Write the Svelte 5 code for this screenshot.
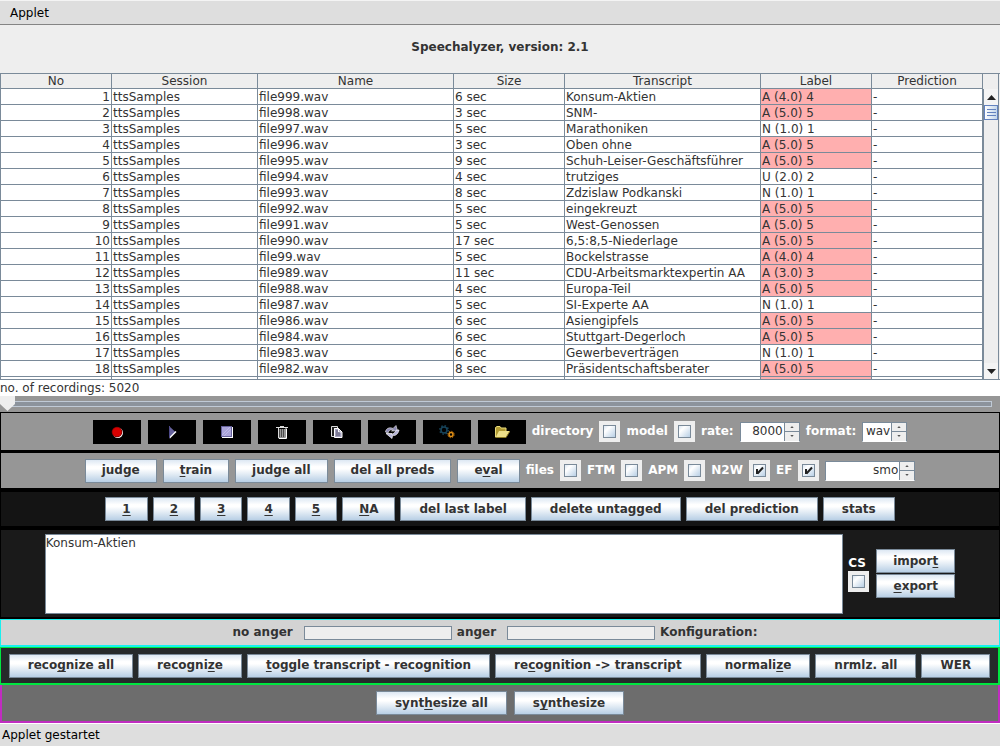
<script>
  const columns = [
    ['No', 111], ['Session', 146], ['Name', 196], ['Size', 111],
    ['Transcript', 196], ['Label', 111], ['Prediction', 111]
  ];
  const recordings = [
    ['999', 6, 'Konsum-Aktien', 'A (4.0) 4'],
    ['998', 3, 'SNM-', 'A (5.0) 5'],
    ['997', 5, 'Marathoniken', 'N (1.0) 1'],
    ['996', 3, 'Oben ohne', 'A (5.0) 5'],
    ['995', 9, 'Schuh-Leiser-Geschäftsführer', 'A (5.0) 5'],
    ['994', 4, 'trutziges', 'U (2.0) 2'],
    ['993', 8, 'Zdzislaw Podkanski', 'N (1.0) 1'],
    ['992', 5, 'eingekreuzt', 'A (5.0) 5'],
    ['991', 5, 'West-Genossen', 'A (5.0) 5'],
    ['990', 17, '6,5:8,5-Niederlage', 'A (5.0) 5'],
    ['99', 5, 'Bockelstrasse', 'A (4.0) 4'],
    ['989', 11, 'CDU-Arbeitsmarktexpertin AA', 'A (3.0) 3'],
    ['988', 4, 'Europa-Teil', 'A (5.0) 5'],
    ['987', 5, 'SI-Experte AA', 'N (1.0) 1'],
    ['986', 6, 'Asiengipfels', 'A (5.0) 5'],
    ['984', 6, 'Stuttgart-Degerloch', 'A (5.0) 5'],
    ['983', 6, 'Gewerbeverträgen', 'N (1.0) 1'],
    ['982', 8, 'Präsidentschaftsberater', 'A (5.0) 5']
  ];
  const icons = ['record', 'play', 'stop', 'delete', 'copy', 'refresh', 'settings', 'open'];

  // An underscore stands before the mnemonic letter.
  const judgeActions = ['judge', '_train', 'judge all', 'del all preds', 'e_val'];
  const labelActions = ['_1', '_2', '_3', '_4', '_5', '_NA', 'del last label', 'delete untagged', 'del prediction', 'stats'];
  const recognizeActions = ['reco_gnize all', 'recogni_ze', '_toggle transcript - recognition', 're_cognition -> transcript', 'normali_ze', 'nrmlz. all', 'WER'];
  const synthActions = ['synt_hesize all', 's_ynthesize'];

  let transcript = $state('Konsum-Aktien');
  let position = $state(0);
</script>

{#snippet action(text)}
  {@const at = text.indexOf('_')}
  <button class="btn" type="button">{#if at < 0}{text}{:else}{text.slice(0, at)}<u>{text[at + 1]}</u>{text.slice(at + 2)}{/if}</button>
{/snippet}

{#snippet tick(id, checked)}
  <span class="tick"><input type="checkbox" {id} {checked} /></span>
{/snippet}

{#snippet spinner(id, value, size, label)}
  <span class="spinner {size}">
    <input type="text" {id} {value} aria-label={label} />
    <span class="steps">
      <button type="button" aria-label="Increase"><svg viewBox="0 0 5 3"><path d="M0 3L2.5 0L5 3z" /></svg></button>
      <button type="button" aria-label="Decrease"><svg viewBox="0 0 5 3"><path d="M0 0L2.5 3L5 0z" /></svg></button>
    </span>
  </span>
{/snippet}

<div class="app">
  <header class="menubar">Applet</header>
  <h1>Speechalyzer, version: 2.1</h1>

  <div class="grid">
    <table>
      <colgroup>
        {#each columns as [, w]}<col style="width: {w}px" />{/each}
      </colgroup>
      <thead>
        <tr>{#each columns as [name]}<th>{name}</th>{/each}</tr>
      </thead>
      <tbody>
        {#each recordings as [file, sec, text, label], i}
          <tr>
            <td class="num">{i + 1}</td>
            <td>ttsSamples</td>
            <td>file{file}.wav</td>
            <td>{sec} sec</td>
            <td>{text}</td>
            <td class:angry={label[0] === 'A'}>{label}</td>
            <td>-</td>
          </tr>
        {/each}
        <tr class="cut">
          {#each columns as [name]}<td class:angry={name === 'Label'}></td>{/each}
        </tr>
      </tbody>
    </table>
    <div class="scroll">
      <div class="corner"></div>
      <button type="button" class="arrow" aria-label="Scroll up"><svg viewBox="0 0 9 5"><path d="M0 5L4.5 0L9 5z" /></svg></button>
      <div class="track">
        <div class="thumb"></div>
      </div>
      <button type="button" class="arrow" aria-label="Scroll down"><svg viewBox="0 0 9 5"><path d="M0 0L4.5 5L9 0z" /></svg></button>
    </div>
  </div>

  <div class="count">no. of recordings: 5020</div>

  <div class="slider">
    <input type="range" min="0" max="100" bind:value={position} aria-label="Position" />
  </div>

  <section class="bar media">
    <div class="tools">
      {#each icons as icon}
        <button type="button" class="tool" aria-label={icon}>
          <svg viewBox="0 0 16 16">
            {#if icon === 'record'}
              <circle cx="8.8" cy="8.8" r="5.2" fill="#fff" />
              <circle cx="8" cy="8" r="5.3" fill="#7a0000" />
              <circle cx="8" cy="8" r="4.6" fill="#d80000" />
            {:else if icon === 'play'}
              <path d="M5 2v12l6.500-6z" fill="#66629c" />
              <path d="M5.500 14L12 7.500" stroke="#fff" stroke-width="1.500" />
              <path d="M5.500 2v12" stroke="#4e4a88" />
            {:else if icon === 'stop'}
              <path d="M3 3h11v11H3z" fill="#fff" />
              <path d="M2 2h11v11H2z" fill="#65619a" />
              <path d="M3 3h9v9H3z" fill="#aaa4d8" />
              <path d="M3 11l8-8M5 12l7-7" stroke="#beb9e8" />
            {:else if icon === 'delete'}
              <path d="M4 5h8v9H4z" fill="#4c4c4c" />
              <path d="M2 3.500h12M6 2.500h4M4.500 4v10h7.500v-10" fill="none" stroke="#ddd" />
              <path d="M6.500 5v8M8.500 5v8M10.500 5v8" stroke="#999" />
              <path d="M5 14.500h7.500V5" fill="none" stroke="#fff" />
            {:else if icon === 'copy'}
              <path d="M2.500 2.500h6v2h-3v8h-3z" fill="#222" stroke="#ddd" />
              <path d="M5.500 4.500h4l3.500 3.500v5.500h-7.500z" fill="#a5a2bd" stroke="#fff" />
              <path d="M9.500 4.500v3.500h3" fill="none" stroke="#fff" />
              <path d="M7 7h2M7 9h4M7 11h4" stroke="#55526e" />
            {:else if icon === 'refresh'}
              <path d="M1.500 8C2 4 6 3 9 4.500L12 1.500L13.500 7H7.500L9.500 6C7 5 5 6 4 9z" fill="#8c89b4" stroke="#ddd" stroke-width=".7" />
              <path d="M15 6C14 10.500 11 12 8.500 11.500L8 14.500L2 9.500H8L7 10.500C9 10 11 9 12.500 6z" fill="#b7b4d8" stroke="#fff" stroke-width=".7" />
            {:else if icon === 'settings'}
              <circle cx="5" cy="6" r="3" fill="none" stroke="#17455c" stroke-width="1.500" />
              <circle cx="5" cy="6" r="4.200" fill="none" stroke="#17455c" stroke-width="1.500" stroke-dasharray="1.500 1.800" />
              <circle cx="12" cy="10.500" r="2" fill="none" stroke="#e29016" stroke-width="1.500" />
              <circle cx="12" cy="10.500" r="3.200" fill="none" stroke="#c87a10" stroke-dasharray="1.300 1.200" />
            {:else}
              <path d="M1.500 13V3.500L3 2.500h3l1 1.500h5v3" fill="#b09a32" stroke="#e8da7a" />
              <path d="M1.500 13.500L5 7h11l-4 6.500z" fill="#eee08a" />
              <path d="M1.500 13.500h10.500L16 7" fill="none" stroke="#8b7a24" />
            {/if}
          </svg>
        </button>
      {/each}
    </div>
    <label for="directory">directory</label>{@render tick('directory', false)}
    <label for="model">model</label>{@render tick('model', false)}
    <label for="rate">rate:</label>{@render spinner('rate', '8000', 'mid')}
    <label for="format">format:</label>{@render spinner('format', 'wav', 'small')}
  </section>

  <section class="bar judge">
    {#each judgeActions as text}{@render action(text)}{/each}
    <label for="files">files</label>{@render tick('files', false)}
    <label for="ftm">FTM</label>{@render tick('ftm', false)}
    <label for="apm">APM</label>{@render tick('apm', false)}
    <label for="n2w">N2W</label>{@render tick('n2w', true)}
    <label for="ef">EF</label>{@render tick('ef', true)}
    {@render spinner('classifier', 'smo', 'large', 'Classifier')}
  </section>

  <section class="bar labels">
    {#each labelActions as text}{@render action(text)}{/each}
  </section>

  <section class="bar edit">
    <textarea bind:value={transcript} aria-label="Transcript" spellcheck="false"></textarea>
    <div class="cs"><label for="cs">CS</label>{@render tick('cs', false)}</div>
    <div class="files">
      {@render action('impor_t')}
      {@render action('_export')}
    </div>
  </section>

  <section class="bar result">
    <label for="noanger">no anger</label><progress id="noanger" value="0" max="1"></progress>
    <label for="anger">anger</label><progress id="anger" value="0" max="1"></progress>
    <span>Konfiguration:</span>
  </section>

  <section class="bar recognize">
    {#each recognizeActions as text}{@render action(text)}{/each}
  </section>

  <section class="bar synth">
    {#each synthActions as text}{@render action(text)}{/each}
  </section>

  <footer>Applet gestartet</footer>
</div>

<style>
  :global(body) { margin: 0; background: #dedede; }
  .app, .app * { box-sizing: border-box; }
  .app {
    display: flex;
    flex-direction: column;
    min-height: 100vh;
    font: 12px/15px "DejaVu Sans", sans-serif;
    color: #333;
    background: #eee;
  }
  button, input, textarea { font: inherit; color: inherit; margin: 0; padding: 0; border-radius: 0; }
  .menubar {
    height: 25px;
    padding: 5px 10px;
    color: #000;
    background: #dedede;
    border-top: 1px solid #f4f4f4;
    border-bottom: 1px solid #848484;
  }
  h1 { margin: 0; padding: 15px 0 18px; font-size: 12px; line-height: 15px; text-align: center; }

  .grid { display: flex; border-top: 1px solid #7a8a99; border-bottom: 1px solid #7a8a99; }
  table { flex: 1; width: 0; table-layout: fixed; border-spacing: 0; border-left: 1px solid #7a8a99; background: #fff; }
  th, td {
    height: 16px;
    padding: 1px 1px 0;
    line-height: 14px;
    font-weight: normal;
    text-align: left;
    white-space: nowrap;
    overflow: hidden;
    border-right: 1px solid #7a8a99;
    border-bottom: 1px solid #7a8a99;
  }
  th { height: 15px; padding: 1px 0 0; line-height: 13px; text-align: center; background: #eee; }
  .num { text-align: right; }
  .angry { background: #ffafaf; }
  .cut td { height: 2px; border-bottom: 0; padding: 0; }
  .scroll { display: flex; flex-direction: column; width: 17px; padding-right: 1px; background: #eee; }
  .scroll > * { border: 0 solid #7a8a99; border-left-width: 1px; border-right-width: 1px; }
  .scroll > .corner { height: 15px; border-left-width: 0; }
  .arrow { display: grid; place-items: center; height: 16px; background: #f4f4f4; }
  .arrow svg { width: 9px; height: 5px; fill: #222; }
  .track { flex: 1; background: #eee; }
  .thumb {
    height: 15px;
    border: 1px solid #6382bf;
    background:
      repeating-linear-gradient(#6382bf 0 1px, transparent 1px 3px) center / 9px 7px no-repeat,
      linear-gradient(90deg, #fff, #c3d6ea);
  }

  .count { height: 16px; padding: 1px 0; background: #fff; }
  .slider { height: 16px; padding-right: 8px; background: #969696; }
  .slider input { appearance: none; display: block; width: 100%; height: 16px; background: none; outline: 0; }
  .slider input::-webkit-slider-runnable-track {
    height: 16px;
    background:
      linear-gradient(#c0cad6, #c0cad6) right 5px / 1px 6px no-repeat,
      linear-gradient(#c0cad6 0 1px, #8c939c 1px 5px, #c0cad6 5px 6px) 8px 5px / 100% 6px no-repeat;
  }
  .slider input::-webkit-slider-thumb {
    appearance: none;
    width: 15px;
    height: 15px;
    background: #eee;
    clip-path: polygon(0 0, 100% 0, 100% 53%, 50% 100%, 0 53%);
  }

  .bar {
    display: flex;
    flex-wrap: wrap;
    align-items: center;
    justify-content: center;
    gap: 5px;
    min-height: 38px;
    border: 1px solid #000;
    font-weight: bold;
  }
  .media, .judge { gap: 6px; background: #969696; color: #fff; }
  .media { min-height: 40px; border-bottom-width: 2px; }
  .judge { border-width: 1px 1px 2px; }
  .labels { background: #141414; border-width: 2px 1px; }
  .edit { min-height: 91px; background: #1a1a1a; border-width: 2px 1px; color: #fff; }
  .result { min-height: 28px; padding-right: 10px; background: #d3d3d3; border-color: #17f0ee; border-bottom-width: 2px; }
  .recognize { background: #262a2b; border: 2px solid #00e640; border-width: 1px 2px 2px 1px; }
  .synth { gap: 7px; background: #6d6d6d; border: 2px solid #c02cc0; border-top: 0; }

  .tools { display: flex; gap: 7px; }
  .tool { display: grid; place-items: center; width: 48px; height: 24px; border: 0; background: #000; }
  .tool svg { width: 16px; height: 16px; }

  .btn {
    height: 24px;
    padding: 0 18px;
    font-weight: bold;
    color: #333;
    border: 1px solid #7a8a99;
    background: linear-gradient(#dde8f3, #fff 30%, #fff 40%, #b8cfe5);
    white-space: nowrap;
  }
  .judge .btn, .edit .btn, .labels .btn { padding: 0 16px; }
  .labels .btn:nth-child(n + 7) { padding: 0 18px; }
  u { text-decoration-thickness: 1px; text-underline-offset: 2px; text-decoration-skip-ink: none; }

  .tick { display: flex; padding: 4px; background: #eee; }
  .tick input {
    appearance: none;
    width: 13px;
    height: 13px;
    border: 1px solid #7a8a99;
    background: linear-gradient(135deg, #dde8f3, #fff 30%, #b8cfe5);
  }
  .tick input:checked {
    background:
      url("data:image/svg+xml,%3Csvg xmlns='http://www.w3.org/2000/svg' viewBox='0 0 11 11'%3E%3Cpath d='M3 4v5M3.500 8.500L9 2.500' fill='none' stroke='%23222' stroke-width='2'/%3E%3C/svg%3E"),
      linear-gradient(135deg, #dde8f3, #fff 30%, #b8cfe5);
  }

  .spinner { display: flex; height: 20px; border: 1px solid #7a8a99; border-bottom-color: #fff; color: #333; font-weight: normal; }
  .spinner input { flex: 1; min-width: 0; border: 0; padding-right: 1px; text-align: right; background: #fff; outline-offset: -1px; }
  .steps { display: flex; flex-direction: column; width: 15px; border-left: 1px solid #7a8a99; }
  .steps button { flex: 1; display: grid; place-items: center; border: 0; background: #eee; }
  .steps button + button { border-top: 1px solid #7a8a99; }
  .steps svg { width: 4px; height: 2px; fill: #555; }
  .small { width: 45px; }
  .mid { width: 60px; }
  .large { width: 90px; }

  textarea {
    width: 80%;
    height: 80px;
    padding: 1px 0;
    border: 1px solid #7a8a99;
    outline: 0;
    background: #fff;
    color: #333;
    font-weight: normal;
    resize: none;
  }
  .cs { display: flex; flex-direction: column; }
  .cs .tick { align-self: flex-start; }
  .files { display: flex; flex-direction: column; gap: 1px; margin-left: 2px; }

  progress { appearance: none; width: 148px; height: 14px; border: 1px solid #7a8a99; background: #eee; }
  progress::-webkit-progress-bar { background: #eee; }
  .result label { margin-right: 6px; }

  footer { flex: 1; padding: 4px 2px; color: #000; background: #dedede; border-top: 1px solid #fff; }
</style>
